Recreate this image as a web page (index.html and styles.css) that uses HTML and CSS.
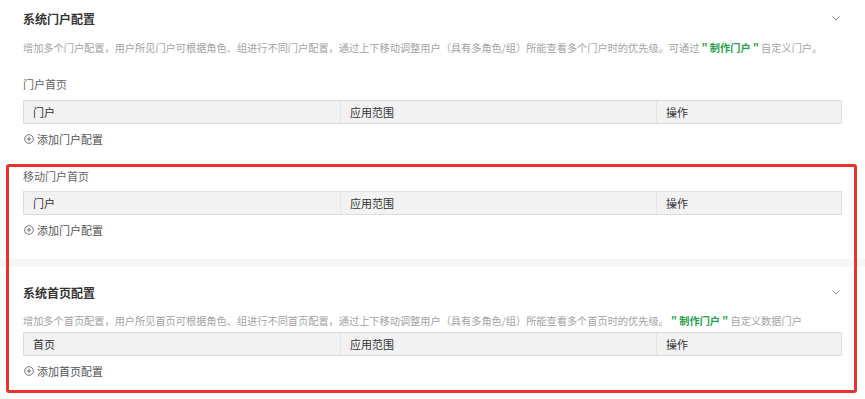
FILE: index.html
```html
<!DOCTYPE html>
<html lang="zh-CN">
  <head>
    <meta charset="UTF-8" />
    <meta name="viewport" content="width=device-width, initial-scale=1.0" />
    <title>门户配置</title>
    <link rel="stylesheet" href="styles.css">
  </head>
  <body>
    <div class="page">
      <!-- 系统门户配置 -->
      <div class="section">
        <div class="section-head">
          <h3>系统门户配置</h3>
          <span class="chevron">
            <svg width="8" height="5" viewBox="0 0 8 5"><path d="M0.5 0.5 L4 4 L7.5 0.5" fill="none" stroke="#888" stroke-width="1"/></svg>
          </span>
        </div>
        <p class="desc">增加多个门户配置，用户所见门户可根据角色、组进行不同门户配置，通过上下移动调整用户（具有多角色/组）所能查看多个门户时的优先级。可通过 <span class="link">" 制作门户 "</span> 自定义门户。</p>

        <div class="sub-label first">门户首页</div>
        <div class="table-head">
          <div class="col col-name">门户</div>
          <div class="col col-range">应用范围</div>
          <div class="col col-op">操作</div>
        </div>
        <div class="add-row">
          <svg class="plus" width="10" height="10" viewBox="0 0 10 10"><circle cx="5" cy="5" r="4.3" fill="none" stroke="#666" stroke-width="0.9"/><path d="M5 2.8 V7.2 M2.8 5 H7.2" stroke="#666" stroke-width="0.9"/></svg>
          添加门户配置
        </div>

        <div class="sub-label">移动门户首页</div>
        <div class="table-head">
          <div class="col col-name">门户</div>
          <div class="col col-range">应用范围</div>
          <div class="col col-op">操作</div>
        </div>
        <div class="add-row">
          <svg class="plus" width="10" height="10" viewBox="0 0 10 10"><circle cx="5" cy="5" r="4.3" fill="none" stroke="#666" stroke-width="0.9"/><path d="M5 2.8 V7.2 M2.8 5 H7.2" stroke="#666" stroke-width="0.9"/></svg>
          添加门户配置
        </div>
      </div>

      <div class="divider"></div>

      <!-- 系统首页配置 -->
      <div class="section second">
        <div class="section-head">
          <h3>系统首页配置</h3>
          <span class="chevron">
            <svg width="8" height="5" viewBox="0 0 8 5"><path d="M0.5 0.5 L4 4 L7.5 0.5" fill="none" stroke="#888" stroke-width="1"/></svg>
          </span>
        </div>
        <p class="desc tight">增加多个首页配置，用户所见首页可根据角色、组进行不同首页配置，通过上下移动调整用户（具有多角色/组）所能查看多个首页时的优先级。 <span class="link">" 制作门户 "</span> 自定义数据门户</p>
        <div class="table-head">
          <div class="col col-name">首页</div>
          <div class="col col-range">应用范围</div>
          <div class="col col-op">操作</div>
        </div>
        <div class="add-row">
          <svg class="plus" width="10" height="10" viewBox="0 0 10 10"><circle cx="5" cy="5" r="4.3" fill="none" stroke="#666" stroke-width="0.9"/><path d="M5 2.8 V7.2 M2.8 5 H7.2" stroke="#666" stroke-width="0.9"/></svg>
          添加首页配置
        </div>
      </div>

      <!-- highlight frame drawn over the content -->
      <div class="highlight"></div>
    </div>
  </body>
</html>
```

FILE: styles.css
```css
body {
  margin: 0;
  padding: 0;
  background-color: #fff;
  font-family: "Noto Sans CJK SC", "Noto Sans", sans-serif;
  color: #333;
  font-size: 11px;
}

.page {
  position: relative;
  height: 399px;
  overflow: hidden;
}

.section {
  padding: 0 23px;
}

.section.second {
  padding-top: 7px;
}

.section-head {
  display: flex;
  align-items: center;
  justify-content: space-between;
  height: 36px;
}

.section-head h3 {
  margin: 0;
  font-size: 12px;
  font-weight: bold;
  color: #333;
}

.chevron {
  display: flex;
  margin-right: 2px;
}

.desc {
  margin: 0;
  line-height: 24px;
  color: #a3a3a3;
  font-size: 10.2px;
  white-space: nowrap;
}

.desc.tight {
  line-height: 22px;
}

.link {
  color: #27a04a;
  font-weight: bold;
}

.sub-label {
  margin-top: 21px;
  margin-bottom: 7px;
  line-height: 16px;
  color: #666;
}

.sub-label.first {
  margin-top: 16px;
  margin-bottom: 8px;
}

.table-head {
  display: flex;
  height: 22px;
  border: 1px solid #ddd;
  background-color: #f2f2f2;
}

.col {
  display: flex;
  align-items: center;
  padding-left: 9px;
  color: #333;
}

.col-name {
  width: 307px;
}

.col-range {
  width: 306px;
  border-left: 1px solid #e6e6e6;
}

.col-op {
  flex: 1;
  border-left: 1px solid #e6e6e6;
}

.add-row {
  display: flex;
  align-items: center;
  gap: 3px;
  margin-top: 7px;
  line-height: 16px;
  color: #555;
}

.plus {
  margin-left: 1px;
}

.divider {
  margin-top: 21px;
  height: 8px;
  background-color: #f5f6f8;
}

.highlight {
  position: absolute;
  left: 6px;
  top: 164px;
  width: 845px;
  height: 223px;
  border: 3px solid #e8322c;
  border-radius: 3px;
}
```
